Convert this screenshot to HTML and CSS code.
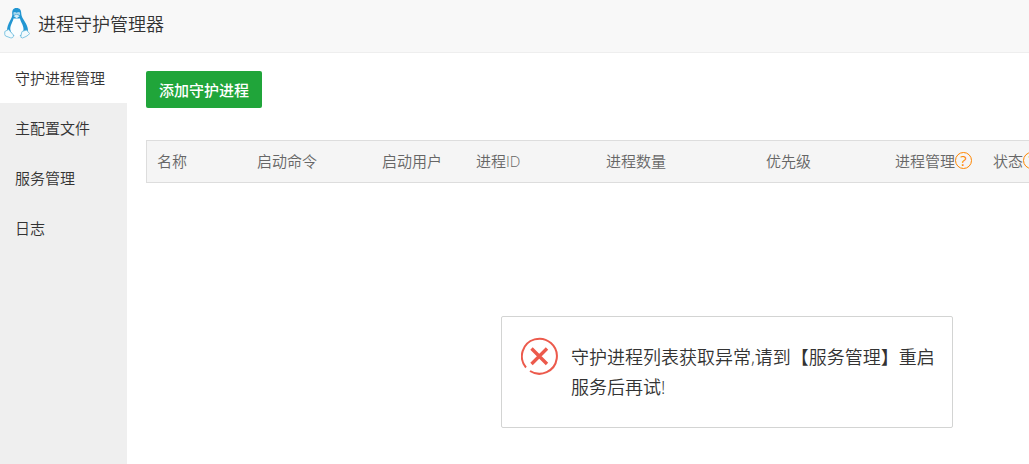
FILE: index.html
```html
<!DOCTYPE html>
<html lang="zh-CN">
<head>
    <meta charset="UTF-8">
    <meta name="viewport" content="width=device-width, initial-scale=1.0">
    <title>进程守护管理器</title>
    <link rel="stylesheet" href="styles.css">
</head>
<body>
    <header class="title-bar">
        <svg class="logo" viewBox="0 0 26 32" aria-hidden="true">
            <path d="M12.500 1C9 1 7.800 3.500 8.300 7.500C8.500 11.500 3 16.500 3 24L7 29H19L24 23.500C24 16.500 17.500 12 17.300 7C17.200 3 16 1 12.500 1Z" fill="#2196d2"/>
            <path d="M9.500 11.500C9 15 6 18 6.300 22.500C7.500 27.500 10 29.500 13 29.500C16.500 29.500 19.500 26.500 19.500 22C19.500 18 16.500 15 16 11.500Z" fill="#fafdff"/>
            <path d="M9.300 5.500Q11 4.300 12.600 5.800Q14.200 4.300 16 5.500V8L12.700 7.300L9.600 8Z" fill="#a6d7ee"/>
            <path d="M9.500 9L12.500 7.500L15.800 9L12.700 11.300Z" fill="#d5edf8"/>
            <path d="M.8 24.500L4.500 22.500L9.500 28Q9.500 31.500 6.500 30.800L1.500 29Q.3 28 .8 24.500Z" fill="#f2fafd" stroke="#65b9dc" stroke-width=".8"/>
            <path d="M18 24.500L22.500 23L25.500 26.500Q25 28 22 29.500L18.500 31Q16 31 17 28Z" fill="#f2fafd" stroke="#65b9dc" stroke-width=".8"/>
        </svg>
        <h1>进程守护管理器</h1>
    </header>

    <div class="container">
        <nav class="menu">
            <a class="active" href="#process">守护进程管理</a>
            <a href="#config">主配置文件</a>
            <a href="#service">服务管理</a>
            <a href="#log">日志</a>
        </nav>

        <main class="content" id="process">
            <button class="btn-add" type="button">添加守护进程</button>

            <table class="process-table">
                <colgroup>
                    <col class="col-name">
                    <col class="col-command">
                    <col class="col-user">
                    <col class="col-pid">
                    <col class="col-count">
                    <col class="col-priority">
                    <col class="col-manage">
                    <col class="col-status">
                </colgroup>
                <thead>
                    <tr>
                        <th>名称</th>
                        <th>启动命令</th>
                        <th>启动用户</th>
                        <th>进程ID</th>
                        <th>进程数量</th>
                        <th>优先级</th>
                        <th><span class="th-help">进程管理<a class="help" href="#service">?</a></span></th>
                        <th><span class="th-help">状态<a class="help" href="#service">?</a></span></th>
                    </tr>
                </thead>
            </table>
        </main>
    </div>

    <div class="message" role="alert">
        <svg class="message-icon" viewBox="0 0 38 38" aria-hidden="true">
            <path d="M5 30.500A17.500 17.500 0 1 1 9 34" fill="none" stroke="#ec5a4c" stroke-width="2"/>
            <path d="M10.500 11.500L26 27M26 11.500L10.500 27" stroke="#ec5a4c" stroke-width="3.400"/>
        </svg>
        <p>守护进程列表获取异常,请到【服务管理】重启服务后再试!</p>
    </div>
</body>
</html>
```

FILE: styles.css
```css
* {
    box-sizing: border-box;
}
body {
    margin: 0;
    min-height: 100vh;
    display: flex;
    flex-direction: column;
    position: relative;
    overflow: hidden;
    background: #fff;
    color: #333;
    font-family: "Open Sans", "Noto Sans CJK SC", sans-serif;
    font-size: 15px;
    font-weight: 350;
}
.title-bar {
    display: flex;
    align-items: center;
    gap: 8px;
    height: 53px;
    padding: 0 4px 7px;
    background: #f8f8f8;
    border-bottom: 1px solid #eee;
}
.title-bar h1 {
    margin: 0;
    font-size: 18px;
    font-weight: 350;
}
.logo {
    width: 26px;
    height: 32px;
}
.container {
    display: flex;
    flex: 1;
}
.menu {
    flex: none;
    width: 127px;
    background: #efefef;
}
.menu a {
    display: block;
    padding-left: 15px;
    line-height: 50px;
    color: #333;
    text-decoration: none;
}
.menu .active {
    background: #fff;
}
.content {
    flex: 1;
    min-width: 0;
    padding: 18px 0 0 19px;
}
.btn-add {
    display: block;
    height: 37px;
    margin-bottom: 32px;
    padding: 0 13px;
    border: 0;
    border-radius: 2px;
    background: #20a53a;
    color: #fff;
    font: inherit;
    font-weight: 500;
    cursor: pointer;
}

/* header row */
.process-table {
    width: 100%;
    min-width: 920px;
    table-layout: fixed;
    border: 1px solid #ddd;
    border-spacing: 0;
    background: #f5f5f5;
}
.process-table th {
    height: 41px;
    padding: 0 10px 2px;
    color: #666;
    font-weight: 350;
    text-align: left;
    white-space: nowrap;
}
.col-name {
    width: 100px;
}
.col-command {
    width: 125px;
}
.col-user {
    width: 94px;
}
.col-pid {
    width: 130px;
}
.col-count {
    width: 160px;
}
.col-priority {
    width: 129px;
}
.col-manage {
    width: 98px;
}
.th-help {
    display: flex;
    align-items: center;
}
.help {
    flex: none;
    width: 17px;
    height: 17px;
    border: 1px solid #ff8500;
    border-radius: 50%;
    color: #ff8500;
    font-weight: 400;
    line-height: 15px;
    text-align: center;
    text-decoration: none;
}

/* error popup */
.message {
    position: absolute;
    top: 316px;
    left: 501px;
    display: flex;
    gap: 12px;
    width: 452px;
    padding: 20px 14px 25px 19px;
    border: 1px solid #d3d4d3;
    border-radius: 2px;
    background: #fff;
}
.message-icon {
    flex: none;
    width: 38px;
    height: 38px;
}
.message p {
    margin: 5px 0 0;
    font-size: 18px;
    line-height: 30px;
}
```
